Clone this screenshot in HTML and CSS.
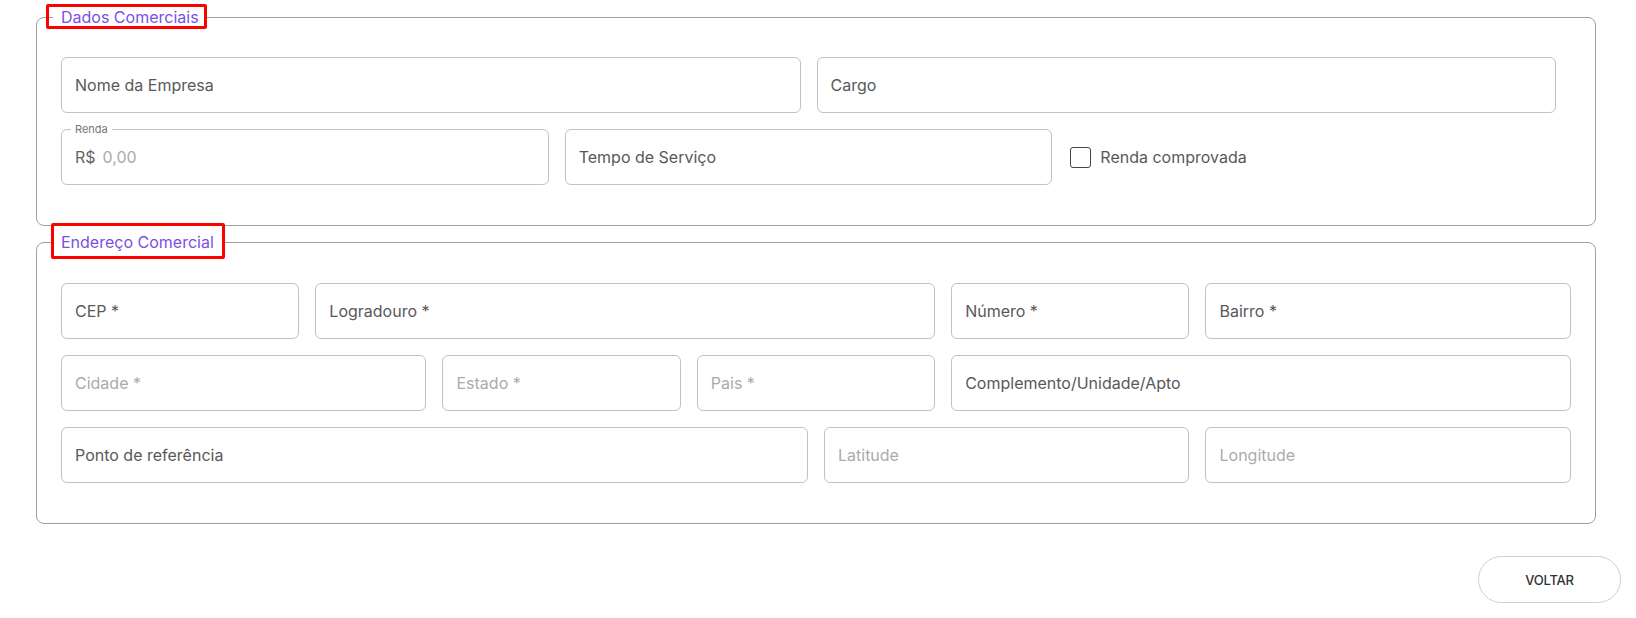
FILE: index.html
```html
<!DOCTYPE html>
<html lang="pt-BR">
<head>
<meta charset="utf-8">
<title>Dados Comerciais</title>
<link rel="stylesheet" href="styles.css">
</head>
<body>
<div class="page">
  <fieldset class="group group-first">
    <legend class="legend"><span class="legend-text">Dados Comerciais</span><span class="mark mark-1"></span></legend>
    <div class="row cols-2">
      <div class="field"><span class="text">Nome da Empresa</span></div>
      <div class="field"><span class="text">Cargo</span></div>
    </div>
    <div class="row cols-3">
      <div class="field field-float">
        <span class="float-label">Renda</span>
        <span class="text prefix">R$</span><span class="text placeholder">0,00</span>
      </div>
      <div class="field"><span class="text">Tempo de Serviço</span></div>
      <label class="check">
        <span class="check-box"></span>
        <span class="text">Renda comprovada</span>
      </label>
    </div>
  </fieldset>

  <fieldset class="group group-second">
    <legend class="legend"><span class="legend-text">Endereço Comercial</span><span class="mark mark-2"></span></legend>
    <div class="grid12">
      <div class="field span-2"><span class="text">CEP *</span></div>
      <div class="field span-5"><span class="text">Logradouro *</span></div>
      <div class="field span-2"><span class="text">Número *</span></div>
      <div class="field span-3"><span class="text">Bairro *</span></div>

      <div class="field span-3"><span class="text placeholder">Cidade *</span></div>
      <div class="field span-2"><span class="text placeholder">Estado *</span></div>
      <div class="field span-2"><span class="text placeholder">Pais *</span></div>
      <div class="field span-5"><span class="text">Complemento/Unidade/Apto</span></div>

      <div class="field span-6"><span class="text">Ponto de referência</span></div>
      <div class="field span-3"><span class="text placeholder">Latitude</span></div>
      <div class="field span-3"><span class="text placeholder">Longitude</span></div>
    </div>
  </fieldset>

  <div class="actions">
    <button class="btn" type="button">VOLTAR</button>
  </div>
</div>
</body>
</html>
```

FILE: styles.css
```css
* { box-sizing: border-box; }

html, body {
  margin: 0;
  padding: 0;
  background: #ffffff;
}

body {
  font-family: "Inter", "Lato", sans-serif;
  color: #595959;
}

.page {
  padding: 7px 40px 0 36px;
}

.group {
  margin: 0;
  border: 1px solid #9e9e9e;
  border-radius: 8px;
  padding: 30px 24px 40px 24px;
  min-width: 0;
}

.group-first {
  padding-right: 39px;
}

.group-second {
  margin-top: 6px;
  padding-top: 31px;
}

.legend {
  position: relative;
  margin-left: -8px;
  padding: 0 8px;
  height: 20px;
  line-height: 20px;
  font-size: 16px;
  color: #7b4fe4;
}

.mark {
  position: absolute;
  border: 3px solid #ff0000;
  border-radius: 2px;
  pointer-events: none;
}

.mark-1 {
  left: -7px;
  right: 0;
  top: -3px;
  bottom: -2px;
}

.mark-2 {
  left: -2px;
  right: -3px;
  top: -9px;
  bottom: -7px;
}

.row {
  display: grid;
  gap: 16px;
}

.row + .row {
  margin-top: 16px;
}

.cols-2 { grid-template-columns: 1fr 1fr; }
.cols-3 { grid-template-columns: 1fr 1fr 1fr; }

.grid12 {
  display: grid;
  grid-template-columns: repeat(12, 1fr);
  column-gap: 16px;
  row-gap: 16px;
}

.span-2 { grid-column: span 2; }
.span-3 { grid-column: span 3; }
.span-5 { grid-column: span 5; }
.span-6 { grid-column: span 6; }

.field {
  position: relative;
  height: 56px;
  border: 1px solid #c2c2c2;
  border-radius: 6px;
  display: flex;
  align-items: center;
  padding: 0 13px;
  font-size: 16px;
}

.text {
  color: #595959;
  white-space: nowrap;
}

.placeholder {
  color: #ababab;
}

.prefix {
  color: #666666;
  margin-right: 7px;
}

.float-label {
  position: absolute;
  left: 9px;
  top: -8px;
  padding: 0 4px;
  background: #ffffff;
  font-size: 11px;
  line-height: 14px;
  color: #777777;
}

.check {
  display: flex;
  align-items: center;
  gap: 9px;
  padding-left: 2px;
  font-size: 16px;
}

.check-box {
  width: 21px;
  height: 21px;
  border: 1.5px solid #444444;
  border-radius: 3px;
  flex: none;
}

.actions {
  display: flex;
  justify-content: flex-end;
  margin-top: 32px;
  margin-right: -25px;
}

.btn {
  width: 143px;
  height: 47px;
  border: 1px solid #cfcfcf;
  border-radius: 24px;
  background: #ffffff;
  font-family: "Inter", sans-serif;
  font-size: 13px;
  font-weight: 500;
  color: #333333;
  letter-spacing: -0.2px;
}
```
